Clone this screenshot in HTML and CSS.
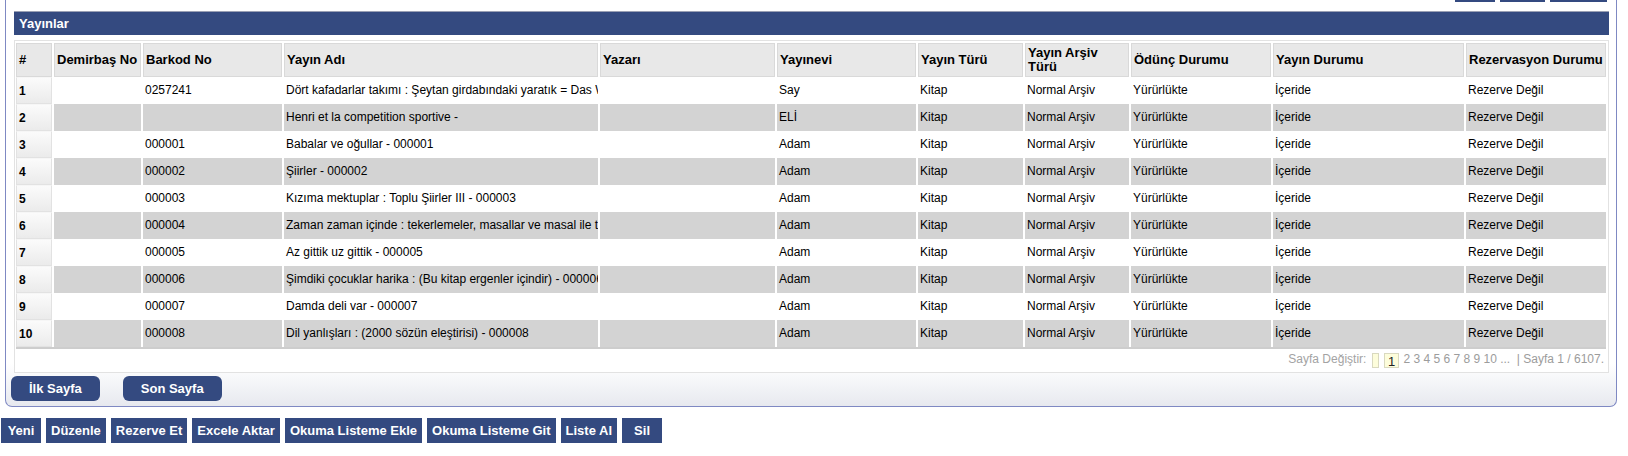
FILE: index.html
```html
<!DOCTYPE html>
<html lang="tr">
<head>
<meta charset="utf-8">
<title>Yayınlar</title>
<link rel="stylesheet" href="styles.css">
</head>
<body>
<div class="panel">
  <div class="toolbar">
    <span class="tb-btn w40"></span>
    <span class="tb-btn w45"></span>
    <span class="tb-btn w57"></span>
  </div>
  <div class="titlebar">Yayınlar</div>
  <div class="gridbox">
    <table class="grid">
      <thead>
        <tr>
          <th class="c1">#</th>
          <th class="c2">Demirbaş No</th>
          <th class="c3">Barkod No</th>
          <th class="c4">Yayın Adı</th>
          <th class="c5">Yazarı</th>
          <th class="c6">Yayınevi</th>
          <th class="c7">Yayın Türü</th>
          <th class="c8 wrap">Yayın Arşiv Türü</th>
          <th class="c9">Ödünç Durumu</th>
          <th class="c10">Yayın Durumu</th>
          <th class="c11">Rezervasyon Durumu</th>
        </tr>
      </thead>
      <tbody>
        <tr><td class="num">1</td><td></td><td>0257241</td><td>Dört kafadarlar takımı : Şeytan girdabındaki yaratık = Das Wunder im Teufelsmoor - 0257241</td><td></td><td>Say</td><td>Kitap</td><td>Normal Arşiv</td><td>Yürürlükte</td><td>İçeride</td><td>Rezerve Değil</td></tr>
        <tr class="alt"><td class="num">2</td><td></td><td></td><td>Henri et la competition sportive -</td><td></td><td>ELİ</td><td>Kitap</td><td>Normal Arşiv</td><td>Yürürlükte</td><td>İçeride</td><td>Rezerve Değil</td></tr>
        <tr><td class="num">3</td><td></td><td>000001</td><td>Babalar ve oğullar - 000001</td><td></td><td>Adam</td><td>Kitap</td><td>Normal Arşiv</td><td>Yürürlükte</td><td>İçeride</td><td>Rezerve Değil</td></tr>
        <tr class="alt"><td class="num">4</td><td></td><td>000002</td><td>Şiirler - 000002</td><td></td><td>Adam</td><td>Kitap</td><td>Normal Arşiv</td><td>Yürürlükte</td><td>İçeride</td><td>Rezerve Değil</td></tr>
        <tr><td class="num">5</td><td></td><td>000003</td><td>Kızıma mektuplar : Toplu Şiirler III - 000003</td><td></td><td>Adam</td><td>Kitap</td><td>Normal Arşiv</td><td>Yürürlükte</td><td>İçeride</td><td>Rezerve Değil</td></tr>
        <tr class="alt"><td class="num">6</td><td></td><td>000004</td><td>Zaman zaman içinde : tekerlemeler, masallar ve masal ile türküler - 000004</td><td></td><td>Adam</td><td>Kitap</td><td>Normal Arşiv</td><td>Yürürlükte</td><td>İçeride</td><td>Rezerve Değil</td></tr>
        <tr><td class="num">7</td><td></td><td>000005</td><td>Az gittik uz gittik - 000005</td><td></td><td>Adam</td><td>Kitap</td><td>Normal Arşiv</td><td>Yürürlükte</td><td>İçeride</td><td>Rezerve Değil</td></tr>
        <tr class="alt"><td class="num">8</td><td></td><td>000006</td><td>Şimdiki çocuklar harika : (Bu kitap ergenler içindir) - 000006</td><td></td><td>Adam</td><td>Kitap</td><td>Normal Arşiv</td><td>Yürürlükte</td><td>İçeride</td><td>Rezerve Değil</td></tr>
        <tr><td class="num">9</td><td></td><td>000007</td><td>Damda deli var - 000007</td><td></td><td>Adam</td><td>Kitap</td><td>Normal Arşiv</td><td>Yürürlükte</td><td>İçeride</td><td>Rezerve Değil</td></tr>
        <tr class="alt"><td class="num">10</td><td></td><td>000008</td><td>Dil yanlışları : (2000 sözün eleştirisi) - 000008</td><td></td><td>Adam</td><td>Kitap</td><td>Normal Arşiv</td><td>Yürürlükte</td><td>İçeride</td><td>Rezerve Değil</td></tr>
      </tbody>
      <tfoot>
        <tr>
          <td colspan="11" class="pager">
            <span class="pg-label">Sayfa Değiştir:</span>
            <span class="pg-box empty"></span>
            <span class="pg-box cur">1</span>
            <span class="pg-nums">2 3 4 5 6 7 8 9 10 ... &nbsp;| Sayfa 1 / 6107.</span>
          </td>
        </tr>
      </tfoot>
    </table>
  </div>
  <div class="navrow">
    <button class="nav-btn">İlk Sayfa</button>
    <button class="nav-btn">Son Sayfa</button>
  </div>
</div>
<div class="actions">
  <button class="act-btn">Yeni</button>
  <button class="act-btn">Düzenle</button>
  <button class="act-btn">Rezerve Et</button>
  <button class="act-btn">Excele Aktar</button>
  <button class="act-btn">Okuma Listeme Ekle</button>
  <button class="act-btn">Okuma Listeme Git</button>
  <button class="act-btn">Liste Al</button>
  <button class="act-btn">Sil</button>
</div>
</body>
</html>
```
FILE: styles.css
```css
html, body {
  margin: 0;
  padding: 0;
  background: #fff;
}
body {
  font-family: "Liberation Sans", Arial, sans-serif;
  font-size: 12px;
  color: #000;
}

.panel {
  margin-left: 5px;
  width: 1612px;
  box-sizing: border-box;
  border: 1px solid #7f89c3;
  border-top: none;
  border-radius: 0 0 7px 7px;
  background: linear-gradient(to bottom, #ffffff 0, #ffffff calc(100% - 42px), #e7e9ef 100%);
  padding-bottom: 5px;
}

.toolbar {
  height: 2px;
  overflow: hidden;
  display: flex;
  justify-content: flex-end;
  align-items: flex-end;
  gap: 5px;
  padding-right: 9px;
}
.tb-btn {
  display: block;
  height: 24px;
  flex: none;
  background: #344a80;
}
.w40 { width: 40px; }
.w45 { width: 45px; }
.w57 { width: 57px; }

.titlebar {
  margin: 9px 7px 0 8px;
  height: 23px;
  border-top: 1px solid #9aa0b4;
  background: #344a80;
  color: #fff;
  font-weight: bold;
  font-size: 13px;
  line-height: 23px;
  padding-left: 5px;
}

.gridbox {
  margin: 5px 7px 0 8px;
  border: 1px solid #e2e2e2;
  background: #fff;
}

.grid {
  table-layout: fixed;
  border-collapse: separate;
  border-spacing: 2px 0;
  width: 1594px;
  margin: 2px 0 0 -1px;
}
.grid th, .grid td {
  box-sizing: border-box;
  white-space: nowrap;
  overflow: hidden;
  text-align: left;
  vertical-align: middle;
}
.grid th {
  height: 34px;
  background: #e8e8e8;
  border: 1px solid #d9d9d9;
  padding: 0 2px;
  font-size: 13px;
  font-weight: bold;
  line-height: 14px;
}
.grid th.wrap { white-space: normal; }

.c1 { width: 36px; }
.c2 { width: 87px; }
.c3 { width: 139px; }
.c4 { width: 314px; }
.c5 { width: 175px; }
.c6 { width: 139px; }
.c7 { width: 105px; }
.c8 { width: 104px; }
.c9 { width: 140px; }
.c10 { width: 191px; }
.c11 { width: 140px; }

.grid td {
  height: 27px;
  padding: 0 2px;
  border-bottom: 1px solid transparent;
  background: #fff;
}
.grid tr.alt td { background: #d3d3d3; }
.grid td.num,
.grid tr.alt td.num {
  font-weight: bold;
  background: linear-gradient(to bottom, #fbfbfb, #ebebeb);
  border: 1px solid #e2e2e2;
  border-top-color: #f6f6f6;
}

.grid tfoot td.pager {
  height: 25px;
  background: #fff;
  border-top: 2px solid #cdcdcd;
  text-align: right;
  padding: 0 2px 0 0;
  color: #a0a0a0;
  font-size: 12px;
}
.pg-label { color: #a3a3a3; }
.pg-box {
  display: inline-block;
  vertical-align: middle;
  height: 15px;
  line-height: 15px;
  border: 1px solid #d9d9bf;
  background: #fdfddb;
  box-sizing: border-box;
  margin-left: 2px;
}
.pg-box.empty { width: 7px; }
.pg-box.cur {
  width: 15px;
  text-align: center;
  color: #222;
  font-size: 13px;
  margin-right: 1px;
}
.pg-nums { color: #9c9c9c; }

.navrow {
  display: flex;
  gap: 23px;
  padding: 3px 0 0 5px;
}
.nav-btn {
  height: 25px;
  padding: 0 18px;
  border: none;
  border-radius: 6px;
  background: #344a80;
  color: #fff;
  font-family: "Liberation Sans", Arial, sans-serif;
  font-size: 13px;
  font-weight: bold;
}

.actions {
  display: flex;
  gap: 5px;
  margin: 11px 0 0 1px;
}
.act-btn {
  height: 25px;
  min-width: 40px;
  padding: 0 5px;
  border: none;
  background: #344a80;
  color: #fff;
  font-family: "Liberation Sans", Arial, sans-serif;
  font-size: 13px;
  font-weight: bold;
}
```
